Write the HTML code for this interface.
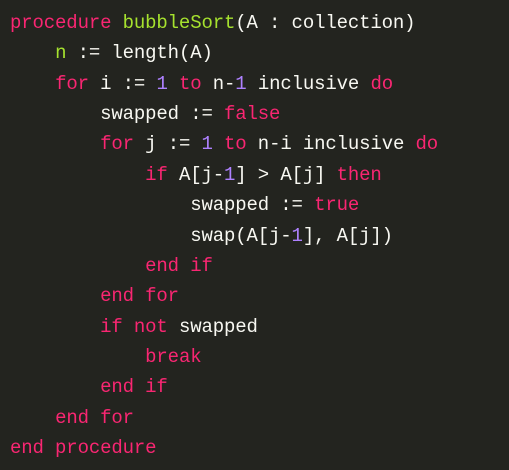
<!DOCTYPE html>
<html><head><style>
html,body{margin:0;padding:0;background:#23241f;}
pre{margin:0;padding:8px 0 0 10px;font-family:"Liberation Mono",monospace;font-size:19px;letter-spacing:-0.14px;line-height:30.36px;color:#f8f8f2;width:499px;height:462px;background:#23241f;}
.k{color:#f92672}.g{color:#a6e22e}.n{color:#ae81ff}
</style></head><body><pre><span class="k">procedure</span> <span class="g">bubbleSort</span>(A : collection)
    <span class="g">n</span> := length(A)
    <span class="k">for</span> i := <span class="n">1</span> <span class="k">to</span> n-<span class="n">1</span> inclusive <span class="k">do</span>
        swapped := <span class="k">false</span>
        <span class="k">for</span> j := <span class="n">1</span> <span class="k">to</span> n-i inclusive <span class="k">do</span>
            <span class="k">if</span> A[j-<span class="n">1</span>] &gt; A[j] <span class="k">then</span>
                swapped := <span class="k">true</span>
                swap(A[j-<span class="n">1</span>], A[j])
            <span class="k">end if</span>
        <span class="k">end for</span>
        <span class="k">if not</span> swapped
            <span class="k">break</span>
        <span class="k">end if</span>
    <span class="k">end for</span>
<span class="k">end procedure</span></pre></body></html>
